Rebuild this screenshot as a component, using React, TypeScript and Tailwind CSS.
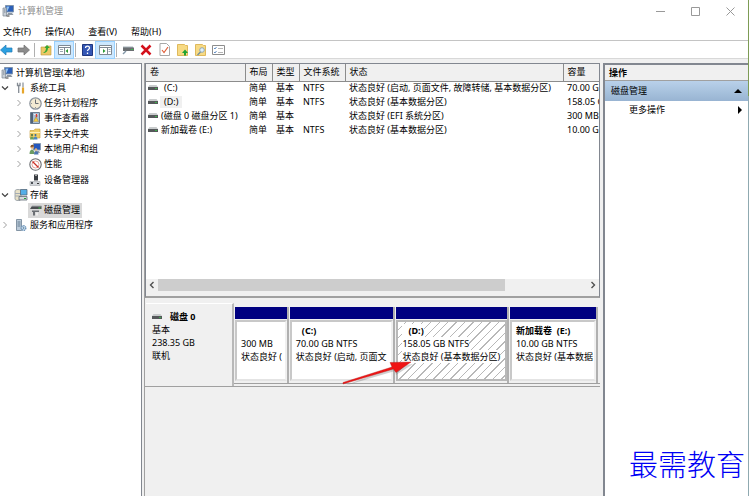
import type { ReactNode } from "react";

const uiFont = "font-['Noto_Sans','Noto_Sans_CJK_SC',sans-serif]";

const ComputerIcon = () => (
  <svg viewBox="0 0 12 12" className="size-3 shrink-0">
    <path d="M3.500 .5h8v6.500h-8z" fill="#2b5fb8" stroke="#7f94ad" />
    <path d="M4.500 1.500h3l-2 4.500h-1z" fill="#8fc0f0" />
    <path d="M6 8h4l1.500 2H5z" fill="#8d97a3" />
    <path d="M1 3h3.500v8H1z" fill="#c9d0d8" stroke="#7b8794" strokeWidth=".7" />
    <path d="M2 5h1.500M2 7h1.500" stroke="#5a6672" strokeWidth=".7" />
    <path d="M4.500 11h3" stroke="#333" />
  </svg>
);

const ToolsIcon = () => (
  <svg viewBox="0 0 12 12" className="size-3 shrink-0" fill="none">
    <path d="M2.500 .8v2.700h2.500V.8M3.700 3.500V11" stroke="#858c94" strokeWidth="1.300" />
    <path d="M8 .5v5" stroke="#868e96" strokeWidth="1.200" />
    <path d="M8 5.500v6" stroke="#e6a62b" strokeWidth="2.200" />
  </svg>
);

const ClockIcon = () => (
  <svg viewBox="0 0 13 13" className="size-[13px] shrink-0">
    <circle cx="6.500" cy="6.500" r="5.700" fill="#f3ead2" stroke="#8a929b" strokeWidth="1.200" />
    <path d="M6.500 2.500v4h3" fill="none" stroke="#6b6f75" />
    <path d="M2 6.500h1M6.500 11v-1" stroke="#999" />
  </svg>
);

const EventIcon = () => (
  <svg viewBox="0 0 12 12" className="size-3 shrink-0">
    <path d="M1.500 .5h9v11h-9z" fill="#a9bfd6" stroke="#6b7d90" />
    <path d="M2 1h2v10H2z" fill="#51647a" />
    <path d="M5 2.500h4M5 9.500h4" stroke="#e8f0f8" />
    <path d="M7.500 2v3" stroke="#d93a2c" strokeWidth="1.500" />
    <path d="M7 5 9.500 9.500h-5z" fill="#f4cc3e" stroke="#91702a" strokeWidth=".4" />
  </svg>
);

const ShareIcon = () => (
  <svg viewBox="0 0 12 12" className="size-3 shrink-0">
    <path d="M1 2.500h4l1-1.500h5v9H1z" fill="#f0cd64" stroke="#c69b35" strokeWidth=".6" />
    <path d="M1 4.500h10" stroke="#fff0b5" />
    <circle cx="3" cy="7" r="1" fill="#446b3d" />
    <circle cx="6.500" cy="7" r="1" fill="#34689d" />
    <path d="M1 11.500c0-4 4-4 4 0z" fill="#6ca059" />
    <path d="M4.500 11.500c0-4 4-4 4 0z" fill="#4e87be" />
  </svg>
);

const UsersIcon = () => (
  <svg viewBox="0 0 12 12" className="size-3 shrink-0">
    <path d="M4.500 .5h7v6.500h-7z" fill="#2457bd" stroke="#8798b1" />
    <path d="M6 8h4l1 2H5z" fill="#929da9" />
    <circle cx="3.200" cy="4" r="1.800" fill="#d6a36f" />
    <path d="M1.500 4c0-3 3.500-3 3.500-.5z" fill="#7a4b25" />
    <path d="M.5 11c0-6 5-6 5 0z" fill="#6b9b64" />
    <circle cx="7" cy="6.500" r="1.300" fill="#e0b17e" />
    <path d="M5 11.500c0-4.500 4.500-4.500 4.500 0z" fill="#4a75b0" />
  </svg>
);

const PerfIcon = () => (
  <svg viewBox="0 0 13 13" className="size-[13px] shrink-0">
    <circle cx="6.500" cy="6.500" r="5.700" fill="#fff" stroke="#6a6d71" strokeWidth="1.100" />
    <circle cx="6.500" cy="6.500" r="3.500" fill="none" stroke="#dc8a82" strokeWidth=".8" />
    <path d="m3.500 3.500 6 6" stroke="#cb2f27" strokeWidth="1.300" />
  </svg>
);

const DeviceIcon = () => (
  <svg viewBox="0 0 12 12" className="size-3 shrink-0">
    <path d="M5 .5h4v6H5z" fill="#3a3d42" />
    <path d="M6 1.500h2" stroke="#aaa" />
    <path d="M1 7.500h10v4H1z" fill="#d4d7db" stroke="#a3a8ad" strokeWidth=".6" />
    <path d="M2 8h2v2H2z" fill="#4b5056" />
    <path d="M8 9.500h2" stroke="#333" />
  </svg>
);

const StorageIcon = () => (
  <svg viewBox="0 0 14 13" className="h-[13px] w-3.5 shrink-0">
    <path d="M1 3c0-2 6-2 6 0v8c0 2-6 2-6 0z" fill="#e9e2c8" stroke="#8d979f" strokeWidth=".8" />
    <path d="M1 5.500h6M1 8h6" stroke="#a3abb3" />
    <path d="M6.500 1.500h6.500v5.500H6.500z" fill="#54aee8" stroke="#566a7c" strokeWidth=".8" />
    <path d="M5 8.500h8v3.500H5z" fill="#d5dade" stroke="#626c76" strokeWidth=".8" />
    <path d="M10 10.500h2" stroke="#25a33b" />
  </svg>
);

const DiskMgmtIcon = () => (
  <svg viewBox="0 0 13 12" className="h-3 w-[13px] shrink-0">
    <path d="M3 2h9.500v3H1z" fill="#4a4d50" />
    <path d="M3 2h9.500" stroke="#a8acaf" />
    <path d="M9.500 4h2" stroke="#39c84d" />
    <path d="M3 6.500h7V8H3zM4 8h2v3.500H4z" fill="#6b6f74" />
    <path d="M8 8.500v3" stroke="#fff" />
  </svg>
);

const ServicesIcon = () => (
  <svg viewBox="0 0 12 13" className="h-[13px] w-3 shrink-0">
    <path d="M1.500 .5h5v11h-5z" fill="#bccbd9" stroke="#6d8093" strokeWidth=".8" />
    <path d="M2.500 3h3M2.500 5h3M2.500 7h3" stroke="#657c92" />
    <circle cx="8.500" cy="9" r="2.300" fill="#d2e3f1" stroke="#6b93b9" strokeWidth="1.400" strokeDasharray="1.300 .6" />
    <circle cx="8.500" cy="9" r=".8" fill="#4d7396" />
  </svg>
);

const VolumeIcon = () => (
  <svg viewBox="0 0 10 6" className="h-1.5 w-2.5 shrink-0">
    <path d="M1.500 0h7L10 2H0z" fill="#c9cccd" />
    <path d="M0 2h10v3H0z" fill="#55585a" />
    <path d="M7 3.500h2" stroke="#3cae49" />
  </svg>
);

const Chevron = ({ open }: { open?: boolean }) => (
  <svg viewBox="0 0 8 8" className="size-2 shrink-0" fill="none">
    {open ? <path d="m1 2.500 3 3 3-3" stroke="#404040" strokeWidth="1.200" /> : <path d="m2.500 1 3 3-3 3" stroke="#a0a0a0" />}
  </svg>
);

type Node = { label: string; icon: ReactNode; level: number; state?: "open" | "closed"; selected?: boolean };

const tree: Node[] = [
  { label: "计算机管理(本地)", icon: <ComputerIcon />, level: 0 },
  { label: "系统工具", icon: <ToolsIcon />, level: 1, state: "open" },
  { label: "任务计划程序", icon: <ClockIcon />, level: 2, state: "closed" },
  { label: "事件查看器", icon: <EventIcon />, level: 2, state: "closed" },
  { label: "共享文件夹", icon: <ShareIcon />, level: 2, state: "closed" },
  { label: "本地用户和组", icon: <UsersIcon />, level: 2, state: "closed" },
  { label: "性能", icon: <PerfIcon />, level: 2, state: "closed" },
  { label: "设备管理器", icon: <DeviceIcon />, level: 2 },
  { label: "存储", icon: <StorageIcon />, level: 1, state: "open" },
  { label: "磁盘管理", icon: <DiskMgmtIcon />, level: 2, selected: true },
  { label: "服务和应用程序", icon: <ServicesIcon />, level: 1, state: "closed" },
];

const levelPad = ["pl-0", "pl-px", "pl-[15px]"];

const volumes = [
  { name: "(C:)", fs: "NTFS", status: "状态良好 (启动, 页面文件, 故障转储, 基本数据分区)", size: "70.00 GB" },
  { name: "(D:)", fs: "NTFS", status: "状态良好 (基本数据分区)", size: "158.05 GB", selected: true },
  { name: "(磁盘 0 磁盘分区 1)", fs: "", status: "状态良好 (EFI 系统分区)", size: "300 MB" },
  { name: "新加载卷 (E:)", fs: "NTFS", status: "状态良好 (基本数据分区)", size: "10.00 GB" },
];

const partitions = [
  { name: "", size: "300 MB", status: "状态良好 (", grow: "grow-[53]" },
  { name: "(C:)", size: "70.00 GB NTFS", status: "状态良好 (启动, 页面文", grow: "grow-[106]" },
  { name: "(D:)", size: "158.05 GB NTFS", status: "状态良好 (基本数据分区)", grow: "grow-[113]", selected: true },
  { name: "新加载卷  (E:)", size: "10.00 GB NTFS", status: "状态良好 (基本数据", grow: "grow-[88]" },
];

const ToolButton = ({ label, active, children }: { label: string; active?: boolean; children: ReactNode }) => (
  <button aria-label={label} className={`flex h-4 w-[18px] shrink-0 items-center justify-center ${active ? "bg-[#cce8ff] outline outline-[#99d1ff]" : ""}`}>
    {children}
  </button>
);

const Separator = () => <div className="mx-0.5 h-3.5 w-px shrink-0 bg-[#b0b0b0]" />;

const Toolbar = () => (
  <div className="flex h-[18px] items-center border-b border-[#d8d8d8]">
    <button aria-label="后退" className="w-[15px]">
      <svg viewBox="0 0 13 12" className="h-3 w-[13px]"><path d="M.5 6 6 1v3h6v4H6v3z" fill="#2ba0e0" stroke="#1f78b4" strokeWidth=".7" /></svg>
    </button>
    <button aria-label="前进" className="w-[17px]">
      <svg viewBox="0 0 13 12" className="ml-0.5 h-3 w-[13px]"><path d="M12.500 6 7 1v3H1v4h6v3z" fill="#8c8c8c" stroke="#6f6f6f" strokeWidth=".7" /></svg>
    </button>
    <Separator />
    <ToolButton label="上移一级">
      <svg viewBox="0 0 12 12" className="size-3"><path d="M1 3h4l1-1h5v9H1z" fill="#edc965" stroke="#bd963e" strokeWidth=".6" /><path d="M3 9c2-1 3-3 3-5H4.500L7 1l3 3H8c0 3-2 5-5 5z" fill="#35a935" /></svg>
    </ToolButton>
    <ToolButton label="显示控制台树" active>
      <svg viewBox="0 0 13 12" className="h-3 w-[13px]"><path d="M.5 1.500h12v9H.5z" fill="#fff" stroke="#7f8993" /><path d="M1 3.500h11M6.500 4v6" stroke="#7f8993" /><path d="M2 5.500h3M2 7.500h3" stroke="#9aa6b1" /><path d="M10 5v4L7.500 7z" fill="#2b9b35" /></svg>
    </ToolButton>
    <Separator />
    <ToolButton label="帮助">
      <svg viewBox="0 0 11 12" className="h-3 w-[11px]"><path d="M.5 .5h10v11H.5z" fill="#3457b5" stroke="#1f367f" /><path d="M3.500 4c0-2.500 4-2.500 4 0 0 1.500-2 1.500-2 3M5.500 8.500V10" fill="none" stroke="#fff" strokeWidth="1.300" /></svg>
    </ToolButton>
    <ToolButton label="显示操作窗格" active>
      <svg viewBox="0 0 13 12" className="h-3 w-[13px]"><path d="M.5 1.500h12v9H.5z" fill="#fff" stroke="#7f8993" /><path d="M1 3.500h11M8.500 4v6" stroke="#7f8993" /><path d="M9.500 5.500h2M9.500 7.500h2" stroke="#9aa6b1" /><path d="M4 5v4l2.500-2z" fill="#2b9b35" /></svg>
    </ToolButton>
    <Separator />
    <ToolButton label="磁盘">
      <svg viewBox="0 0 12 10" className="h-2.5 w-3"><path d="M1 2h10l1 1v3H1z" fill="#6b6f72" /><path d="M1 2h10" stroke="#a5b1b8" /><path d="M9 4.500h2" stroke="#39bd4b" /><path d="m1 9 3-3" stroke="#8397a8" strokeWidth="1.500" /></svg>
    </ToolButton>
    <ToolButton label="删除">
      <svg viewBox="0 0 12 12" className="size-3"><path d="m1.500 1.500 9 9m0-9-9 9" stroke="#d4101b" strokeWidth="2.500" /></svg>
    </ToolButton>
    <ToolButton label="属性">
      <svg viewBox="0 0 11 13" className="h-[13px] w-[11px]"><path d="M1 .5h6.500l3 3v9H1z" fill="#fff" stroke="#a8a8a8" /><path d="m3 7 2 2.500L9 4" fill="none" stroke="#e05e38" strokeWidth="1.200" /></svg>
    </ToolButton>
    <ToolButton label="新建">
      <svg viewBox="0 0 11 12" className="h-3 w-[11px]"><path d="M.5 .5h7l1 1h2v10H.5z" fill="#f7da84" stroke="#dfb95c" /><path d="M7 11.500V9H5l3-3.500L11 9H9v2.500z" fill="#20a333" /></svg>
    </ToolButton>
    <ToolButton label="查找">
      <svg viewBox="0 0 11 12" className="h-3 w-[11px]"><path d="M.5 .5h7l1 1h2v10H.5z" fill="#f7da84" stroke="#dfb95c" /><circle cx="7" cy="6" r="2.300" fill="#dff0fb" stroke="#8fa7b5" /><path d="m5.500 8-3 3" stroke="#718d9c" strokeWidth="1.300" /></svg>
    </ToolButton>
    <ToolButton label="设置">
      <svg viewBox="0 0 13 12" className="h-3 w-[13px]"><path d="M.5 1.500h12v9H.5z" fill="#fff" stroke="#8d8d8d" /><path d="m2 4 1 1 1.500-2M2 8l1 1 1.500-2" fill="none" stroke="#4076b8" strokeWidth=".8" /><path d="M6 4.500h5M6 8.500h5" stroke="#b5b5b5" /></svg>
    </ToolButton>
  </div>
);

const TreePane = () => (
  <nav className="w-[142px] shrink-0 border-t border-r border-[#828790] bg-white pt-px">
    <ul className="grid h-[168px] grid-rows-11">
      {tree.map((n) => (
        <li key={n.label} className={`flex items-center ${levelPad[n.level]}`}>
          {n.level > 0 && <span className="flex w-[13px] shrink-0">{n.state && <Chevron open={n.state === "open"} />}</span>}
          <a href="#" className={`flex h-[15px] items-center gap-0.5 pr-0.5 ${n.selected ? "bg-[#d9d9d9]" : ""}`}>
            <span className="flex w-3.5 shrink-0 justify-center">{n.icon}</span>
            {n.label}
          </a>
        </li>
      ))}
    </ul>
  </nav>
);

const VolumeList = () => (
  <div className="flex h-[235px] shrink-0 flex-col overflow-hidden border-t border-r border-b-2 border-l border-[#828790] border-b-[#a0a0a0] bg-white">
    <div className="grow overflow-hidden">
      <table className="w-[520px] table-fixed border-collapse text-left">
        <colgroup>
          <col className="w-[99px]" />
          <col className="w-[27px]" />
          <col className="w-[27px]" />
          <col className="w-[46px]" />
          <col className="w-[218px]" />
          <col />
        </colgroup>
        <thead>
          <tr className="h-[17px] bg-[#f0f0f0]">
            {["卷", "布局", "类型", "文件系统", "状态", "容量"].map((h) => (
              <th key={h} className="border-r border-b border-[#8c8c8c] p-0 pl-1 font-normal">{h}</th>
            ))}
          </tr>
        </thead>
        <tbody>
          {volumes.map((v) => (
            <tr key={v.name} className="h-3.5">
              <td className="p-0">
                <div className="flex items-center pl-0.5">
                  <VolumeIcon />
                  <span className={`ml-0.5 px-px ${v.fs && !v.name.startsWith("新") ? "pl-1 pr-1" : ""} ${v.selected ? "bg-[#f0f0f0]" : ""}`}>{v.name}</span>
                </div>
              </td>
              <td className="p-0 pl-1">简单</td>
              <td className="p-0 pl-1">基本</td>
              <td className="p-0 pl-1">{v.fs}</td>
              <td className="p-0 pl-1">{v.status}</td>
              <td className="p-0 pl-1">{v.size}</td>
            </tr>
          ))}
        </tbody>
      </table>
    </div>
    <div className="flex h-[17px] shrink-0 items-start bg-[#f0f0f0]">
      <button aria-label="向左滚动" className="flex h-3 w-3 items-center justify-center">
        <svg viewBox="0 0 8 8" className="size-2" fill="none"><path d="M5.500 1 2.500 4l3 3" stroke="#505050" strokeWidth="1.400" /></svg>
      </button>
      <div className="flex h-3 grow"><div className="w-[81%] bg-[#cdcdcd]" /></div>
      <button aria-label="向右滚动" className="flex h-3 w-3 items-center justify-center">
        <svg viewBox="0 0 8 8" className="size-2" fill="none"><path d="m2.500 1 3 3-3 3" stroke="#505050" strokeWidth="1.400" /></svg>
      </button>
    </div>
  </div>
);

const DiskMap = () => (
  <div className="relative mt-[5px] flex h-[84px] shrink-0 border-b border-[#a0a0a0] pl-px">
    <div className="w-[88px] shrink-0 border-t border-r-2 border-white border-r-[#b8b8b8] px-1.5 pt-1.5 leading-[13px]">
      <div className="flex items-center gap-2 font-bold"><VolumeIcon />磁盘 0</div>
      <div>基本</div>
      <div>238.35 GB</div>
      <div>联机</div>
    </div>
    <div className="mt-1 mb-0.5 flex min-w-0 grow gap-px border-b border-[#a0a0a0] pr-0.5 pl-px">
      {partitions.map((p) => (
        <div key={p.size} className={`flex min-w-0 basis-0 flex-col border-r-2 border-[#b0b0b0] ${p.grow}`}>
          <div className="h-3 shrink-0 bg-[#000080]" />
          <div
            className={`mt-px mb-0.5 grow overflow-hidden border-2 p-1 pt-0.5 leading-[13px] whitespace-pre ${
              p.selected
                ? "border-[#b8b8b8] bg-[repeating-linear-gradient(135deg,#fff_0px,#fff_5px,#b8b8b8_5px,#b8b8b8_6px)]"
                : "border-[#c8c8c8] border-r-[#f0f0f0] border-b-[#e4e4e4] bg-white"
            }`}
          >
            <div className="h-[13px] font-bold"><span className={`${p.name.startsWith("(") ? "pl-1.5" : ""} ${p.selected ? "bg-white" : ""}`}>{p.name}</span></div>
            <div><span className={p.selected ? "bg-white" : ""}>{p.size}</span></div>
            <div><span className={p.selected ? "bg-white" : ""}>{p.status}</span></div>
          </div>
        </div>
      ))}
    </div>
    <svg viewBox="0 0 74 28" className="absolute top-14 left-[196px] h-7 w-[74px]">
      <path d="M3 27 54 12l1 4 17-11-20 3z" fill="#777" opacity=".35" />
      <path d="M2 23.500 51 8l-2-4.500L70 3 55 13.500 52.500 10 2 25z" fill="#f01414" stroke="#b01818" strokeWidth=".4" />
    </svg>
  </div>
);

const ActionsPane = () => (
  <aside className="flex w-[145px] shrink-0 flex-col border-t-2 border-l-2 border-[#828790] bg-white">
    <h2 className="flex h-4 shrink-0 items-center border-b border-[#a0a0a0] bg-[#f0f0f0] pl-1 font-bold">操作</h2>
    <button className="flex h-5 shrink-0 items-center justify-between bg-linear-to-b from-[#b9d1ea] to-[#98b4d2] pr-1.5 pl-1.5">
      磁盘管理
      <svg viewBox="0 0 8 4" className="h-1 w-2"><path d="M0 4h8L4 0z" /></svg>
    </button>
    <button className="flex h-[18px] shrink-0 items-center justify-between pr-1.5 pl-6">
      更多操作
      <svg viewBox="0 0 4 8" className="h-2 w-1"><path d="M0 0v8l4-4z" /></svg>
    </button>
    <p className="mt-auto mb-2.5 pl-6 font-['Liberation_Serif','Noto_Sans_CJK_SC',serif] text-[29px] leading-10 font-light text-[#0000f5]">最需教育</p>
  </aside>
);

const App = () => (
  <div className={`flex h-screen overflow-hidden bg-white text-[9px] leading-3 whitespace-nowrap text-black ${uiFont}`}>
    <div className="flex min-w-0 grow flex-col bg-[#f0f0f0]">
      <header className="flex h-[22px] shrink-0 items-center bg-white pl-0.5 text-[#8f8f8f]">
        <ComputerIcon />
        <h1 className="ml-1">计算机管理</h1>
        <div className="ml-auto flex gap-[26px] pr-[13px]">
          <button aria-label="最小化"><svg viewBox="0 0 9 9" className="size-[9px]"><path d="M0 4.500h9" stroke="#999" /></svg></button>
          <button aria-label="最大化"><svg viewBox="0 0 9 9" className="size-[9px]"><path d="M.5 .5h8v8h-8z" fill="none" stroke="#999" /></svg></button>
          <button aria-label="关闭"><svg viewBox="0 0 9 9" className="size-[9px]"><path d="m.5 .5 8 8m0-8-8 8" stroke="#999" /></svg></button>
        </div>
      </header>
      <div className="flex h-[19px] shrink-0 items-center gap-3.5 border-b border-[#c4c4c4] bg-white pt-px pl-[3px]">
        {["文件(F)", "操作(A)", "查看(V)", "帮助(H)"].map((m) => (
          <button key={m}>{m}</button>
        ))}
      </div>
      <div className="shrink-0 bg-white"><Toolbar /></div>
      <main className="flex min-h-0 grow pt-1">
        <TreePane />
        <section className="ml-0.5 mr-[3px] flex min-w-0 grow flex-col border-l border-[#a0a0a0]">
          <VolumeList />
          <DiskMap />
        </section>
        <ActionsPane />
      </main>
    </div>
    {/* desktop showing past the window edge */}
    <div className="flex w-1 shrink-0 flex-col border-r-[3px] border-white">
      <div className="h-24 bg-[#7d9c55]" />
      <div className="grow bg-[#8fa9b0]" />
    </div>
  </div>
);

export default App;
